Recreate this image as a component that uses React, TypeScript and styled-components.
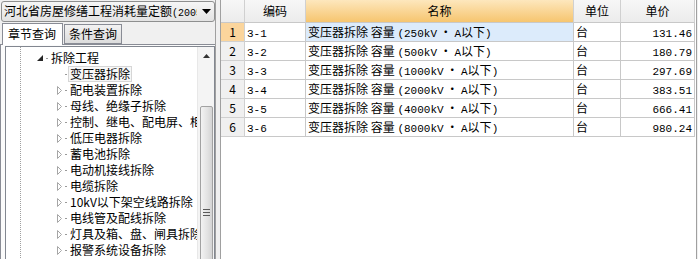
import * as React from "react";
import styled, {createGlobalStyle} from "styled-components";

const Global = createGlobalStyle`
  html, body {
    margin: 0;
    padding: 0;
    background: #f0f0f0;
  }
  body {
    font-family: "Noto Sans CJK SC", "DejaVu Sans", sans-serif;
    font-size: 12px;
    color: #000;
  }
`;

const Window = styled.div`
  display: flex;
  width: 698px;
  height: 259px;
  overflow: hidden;
  background: #f0f0f0;
`;

const LeftPanel = styled.div`
  width: 215px;
  flex-shrink: 0;
  display: flex;
  flex-direction: column;
  border-right: 1px solid #a0a0a0;
`;

const Combo = styled.div`
  height: 19px;
  margin: 1px 0 0 1px;
  border: 1px solid #8e8f8f;
  border-radius: 3px;
  background: linear-gradient(#f6f6f6, #e3e3e3);
  display: flex;
  align-items: center;
  padding-left: 2px;
`;

const ComboText = styled.span`
  flex: 1;
  font-size: 12px;
  line-height: 19px;
  white-space: nowrap;
  overflow: hidden;
  margin-right: 4px;
`;

const ComboArrow = styled.span`
  width: 11px;
  display: flex;
  justify-content: center;
  padding-right: 2px;
`;

const TabBar = styled.div`
  display: flex;
  align-items: flex-end;
  height: 22px;
  padding-left: 2px;
  margin-top: 1px;
`;

const Tab = styled.div<{ $active?: boolean }>`
  height: ${p => (p.$active ? "21px" : "18px")};
  padding: 0 ${p => (p.$active ? "6px" : "4px")} 0 ${p => (p.$active ? "5px" : "4px")};
  margin-bottom: ${p => (p.$active ? "-1px" : "0")};
  border: 1px solid #898c95;
  border-bottom: ${p => (p.$active ? "none" : "1px solid #898c95")};
  background: ${p => (p.$active ? "#fff" : "linear-gradient(#f2f2f2, #dcdcdc)")};
  font-size: 12px;
  line-height: ${p => (p.$active ? "20px" : "18px")};
  position: relative;
  z-index: ${p => (p.$active ? 2 : 1)};
  & + & {
    margin-left: 1px;
  }
`;

const Page = styled.div`
  flex: 1;
  border-left: 1px solid #898c95;
  border-top: 1px solid #898c95;
  display: flex;
  padding: 1px 0 0 4px;
  background: #fbfbfb;
`;

const TreeBox = styled.div`
  flex: 1;
  border: 1px solid #828790;
  border-bottom: none;
  background: #fff;
  display: flex;
  overflow: hidden;
`;

const TreeList = styled.div`
  flex: 1;
  position: relative;
  padding-top: 3px;
  overflow: hidden;
`;

const GuideLine = styled.div`
  position: absolute;
  left: 14px;
  top: 0;
  bottom: 0;
  border-left: 1px dotted #a0a0a0;
`;

const TreeRow = styled.div<{ $level: number }>`
  height: 16px;
  display: flex;
  align-items: center;
  padding-left: ${p => 30 + p.$level * 19}px;
  white-space: nowrap;
`;

const Expander = styled.span`
  width: 8px;
  height: 16px;
  display: flex;
  align-items: center;
  justify-content: center;
  flex-shrink: 0;
`;

const Connector = styled.span`
  width: 2px;
  height: 1px;
  background: #9a9a9a;
  margin: 0 1px 0 2px;
  flex-shrink: 0;
`;

const NodeLabel = styled.span<{ $selected?: boolean }>`
  font-size: 12px;
  line-height: 14px;
  padding: 0 1px;
  border: 1px solid ${p => (p.$selected ? "#d6d6d6" : "transparent")};
  background: ${p => (p.$selected ? "#f7f7f7" : "transparent")};
`;

const ScrollBar = styled.div`
  width: 16px;
  flex-shrink: 0;
  background: #f4f4f4;
  border-left: 1px solid #e8e8e8;
  display: flex;
  flex-direction: column;
  align-items: center;
`;

const ScrollButton = styled.div`
  height: 17px;
  width: 100%;
  display: flex;
  align-items: center;
  justify-content: center;
`;

const ScrollThumb = styled.div`
  margin-top: 42px;
  width: 13px;
  height: 240px;
  border: 1px solid #a2a2a2;
  border-radius: 2px;
  background: linear-gradient(90deg, #f3f3f3, #e2e2e2 60%, #d4d4d4);
  display: flex;
  flex-direction: column;
  align-items: center;
  padding-top: 102px;
  box-sizing: border-box;
  gap: 2px;
`;

const Grip = styled.span`
  width: 7px;
  height: 1px;
  background: #5a5a5a;
`;

const Splitter = styled.div`
  width: 4px;
  flex-shrink: 0;
  background: #f0f0f0;
`;

const GridPanel = styled.div`
  flex: 1;
  background: #fff;
  border-left: 1px solid #a0a0a0;
  border-right: 1px solid #a0a0a0;
  margin-right: 1px;
`;

const Table = styled.div`
  display: grid;
  grid-template-columns: 24px 61px 268px 47px 74px;
`;

const HeadCell = styled.div<{ $sorted?: boolean }>`
  height: 22px;
  line-height: 22px;
  text-align: center;
  font-size: 12px;
  border-right: 1px solid #d0d0d0;
  border-bottom: 1px solid #c8c8c8;
  background: ${p => (p.$sorted ? "linear-gradient(#fde7bd, #f6c56f)" : "linear-gradient(#f7f7f7, #ececec)")};
`;

const NumCell = styled.div<{ $selected?: boolean }>`
  height: 18px;
  line-height: 18px;
  text-align: center;
  font-size: 12px;
  border-right: 1px solid #d0d0d0;
  border-bottom: 1px solid #d0d0d0;
  background: ${p => (p.$selected ? "#fbd59c" : "#f0f0f0")};
`;

const Cell = styled.div<{ $align?: string; $selected?: boolean }>`
  height: 18px;
  line-height: 18px;
  padding: 0 2px;
  font-size: 12px;
  white-space: pre;
  overflow: hidden;
  text-align: ${p => p.$align || "left"};
  border-right: 1px solid #c8c8c8;
  border-bottom: 1px solid #c8c8c8;
  background: ${p => (p.$selected ? "#dcebfb" : "#fff")};
`;

const Mono = styled.span`
  font-family: "Liberation Mono", "DejaVu Sans Mono", monospace;
  font-size: 11px;
`;

const ComboMono = styled.span`
  font-family: "Liberation Mono", "DejaVu Sans Mono", monospace;
  font-size: 10px;
`;

const ExpandedIcon = () => (
  <svg width="6" height="6" viewBox="0 0 6 6">
    <polygon points="6,0 6,6 0,6" fill="#262626" />
  </svg>
);

const CollapsedIcon = () => (
  <svg width="5" height="9" viewBox="0 0 5 9">
    <polygon points="0.5,0.5 4.5,4.5 0.5,8.5" fill="#fff" stroke="#a6a6a6" strokeWidth="1" />
  </svg>
);

const DownArrow = () => (
  <svg width="9" height="5" viewBox="0 0 9 5">
    <polygon points="0,0 9,0 4.5,5" fill="#000" />
  </svg>
);

const UpArrow = () => (
  <svg width="7" height="4" viewBox="0 0 7 4">
    <polygon points="3.5,0 7,4 0,4" fill="#333" />
  </svg>
);

const children = [
  "配电装置拆除",
  "母线、绝缘子拆除",
  "控制、继电、配电屏、柜拆除",
  "低压电器拆除",
  "蓄电池拆除",
  "电动机接线拆除",
  "电缆拆除",
  "10kV以下架空线路拆除",
  "电线管及配线拆除",
  "灯具及箱、盘、闸具拆除",
  "报警系统设备拆除",
];

const rows = [
  {code: "3-1", cap: "250", price: "131.46"},
  {code: "3-2", cap: "500", price: "180.79"},
  {code: "3-3", cap: "1000", price: "297.69"},
  {code: "3-4", cap: "2000", price: "383.51"},
  {code: "3-5", cap: "4000", price: "666.41"},
  {code: "3-6", cap: "8000", price: "980.24"},
];

export default function App() {
  return (
    <Window>
      <Global />
      <LeftPanel>
        <Combo>
          <ComboText>河北省房屋修缮工程消耗量定额<ComboMono>(2005)</ComboMono></ComboText>
          <ComboArrow><DownArrow /></ComboArrow>
        </Combo>
        <TabBar>
          <Tab $active>章节查询</Tab>
          <Tab>条件查询</Tab>
        </TabBar>
        <Page>
          <TreeBox>
            <TreeList>
              <GuideLine />
              <TreeRow $level={0}>
                <Expander><ExpandedIcon /></Expander>
                <Connector />
                <NodeLabel>拆除工程</NodeLabel>
              </TreeRow>
              <TreeRow $level={1}>
                <Expander />
                <Connector />
                <NodeLabel $selected>变压器拆除</NodeLabel>
              </TreeRow>
              {children.map(c => (
                <TreeRow $level={1} key={c}>
                  <Expander><CollapsedIcon /></Expander>
                  <Connector />
                  <NodeLabel>{c}</NodeLabel>
                </TreeRow>
              ))}
            </TreeList>
            <ScrollBar>
              <ScrollButton><UpArrow /></ScrollButton>
              <ScrollThumb>
                <Grip />
                <Grip />
                <Grip />
              </ScrollThumb>
            </ScrollBar>
          </TreeBox>
        </Page>
      </LeftPanel>
      <Splitter />
      <GridPanel>
        <Table>
          <HeadCell />
          <HeadCell>编码</HeadCell>
          <HeadCell $sorted>名称</HeadCell>
          <HeadCell>单位</HeadCell>
          <HeadCell>单价</HeadCell>
          {rows.map((r, i) => (
            <React.Fragment key={r.code}>
              <NumCell $selected={i === 0}>{i + 1}</NumCell>
              <Cell><Mono>{r.code}</Mono></Cell>
              <Cell $selected={i === 0}>变压器拆除 容量 <Mono>({r.cap}kV</Mono> · <Mono>A</Mono>以下<Mono>)</Mono></Cell>
              <Cell>台</Cell>
              <Cell $align="right"><Mono>{r.price}</Mono></Cell>
            </React.Fragment>
          ))}
        </Table>
      </GridPanel>
    </Window>
  );
}
